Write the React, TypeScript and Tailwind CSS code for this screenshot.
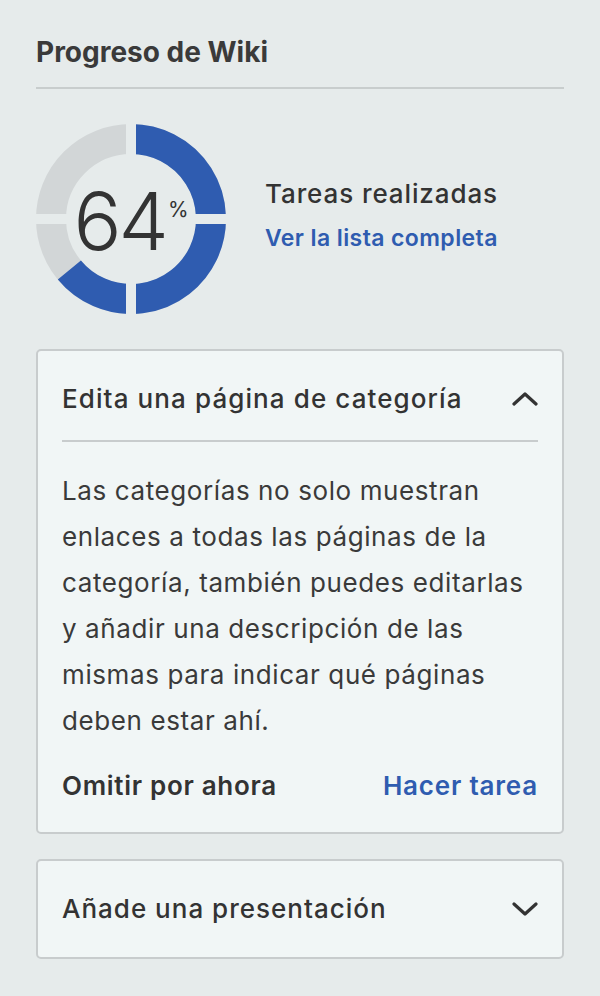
import React from 'react';

const BLUE = '#2f5cb0';

const Donut = ({ percent }: { percent: number }) => {
  const cx = 95;
  const cy = 95;
  const r = 80;
  const angle = (percent / 100) * 360;
  const rad = ((angle - 90) * Math.PI) / 180;
  const ex = cx + r * Math.cos(rad);
  const ey = cy + r * Math.sin(rad);
  const large = angle > 180 ? 1 : 0;

  return (
    <div className="relative w-[190px] h-[190px] shrink-0">
      <svg width="190" height="190" viewBox="0 0 190 190">
        <circle cx={cx} cy={cy} r={r} fill="none" stroke="#d2d6d7" strokeWidth="30" />
        <path
          d={`M ${cx} ${cy - r} A ${r} ${r} 0 ${large} 1 ${ex} ${ey}`}
          fill="none"
          stroke={BLUE}
          strokeWidth="30"
        />
        {/* quadrant gaps */}
        <rect x="90" y="0" width="10" height="190" fill="#e6ebeb" />
        <rect x="0" y="90" width="190" height="10" fill="#e6ebeb" />
      </svg>
      <div className="absolute inset-0 flex items-center justify-center text-[#333333]">
        <span className="text-[80px] font-light leading-none tracking-[-3px] mt-[4px]">64</span>
        <span className="text-[21px] font-normal leading-none self-start mt-[75px] ml-[2px]">%</span>
      </div>
    </div>
  );
};

const ChevronUp = () => (
  <svg width="26" height="16" viewBox="0 0 26 16" fill="none">
    <path d="M2 13 L13 3 L24 13" stroke="#333333" strokeWidth="3.2" strokeLinecap="round" strokeLinejoin="round" />
  </svg>
);

const ChevronDown = () => (
  <svg width="26" height="16" viewBox="0 0 26 16" fill="none">
    <path d="M2 3 L13 13 L24 3" stroke="#333333" strokeWidth="3.2" strokeLinecap="round" strokeLinejoin="round" />
  </svg>
);

export default function App() {
  return (
    <div className="min-h-[996px] w-[600px] bg-[#e6ebeb] px-[36px] pt-[34px] font-['Inter',sans-serif] text-[#333333]">
      <h2 className="text-[28px] font-bold leading-[36px] text-[#3a3a3a]">Progreso de Wiki</h2>
      <div className="mt-[17px] h-[2px] bg-[#c8cdcd]" />

      <div className="mt-[35px] flex items-center">
        <Donut percent={64} />
        <div className="ml-[39px] flex flex-col -mt-[8px]">
          <span className="text-[26px] font-medium leading-[32px] tracking-[0.9px]">Tareas realizadas</span>
          <a className="mt-[14px] text-[23px] font-semibold leading-[28px] tracking-[0.4px] text-[#2f5cb0]">
            Ver la lista completa
          </a>
        </div>
      </div>

      <div className="mt-[35px] rounded-[5px] border-2 border-[#c8cccd] bg-[#f1f6f6] px-[24px] pb-[28px]">
        <div className="flex items-center justify-between pt-[30px] pb-[23px] border-b-2 border-[#c8cccd]">
          <span className="text-[26px] font-medium leading-[36px] tracking-[1.1px]">Edita una página de categoría</span>
          <ChevronUp />
        </div>
        <p className="mt-[26px] text-[26px] leading-[46px] tracking-[0.6px] text-[#3a3a3a]">
          Las categorías no solo muestran enlaces a todas las páginas de la categoría, también puedes editarlas y
          añadir una descripción de las mismas para indicar qué páginas deben estar ahí.
        </p>
        <div className="mt-[24px] flex items-center justify-between">
          <span className="text-[26px] font-semibold leading-[36px] tracking-[0.7px]">Omitir por ahora</span>
          <a className="text-[26px] font-semibold leading-[36px] tracking-[0.8px] text-[#2f5cb0]">Hacer tarea</a>
        </div>
      </div>

      <div className="mt-[25px] flex h-[100px] items-center justify-between rounded-[5px] border-2 border-[#c8cccd] bg-[#f1f6f6] px-[24px]">
        <span className="text-[26px] font-medium leading-[36px] tracking-[1px]">Añade una presentación</span>
        <ChevronDown />
      </div>
    </div>
  );
}
